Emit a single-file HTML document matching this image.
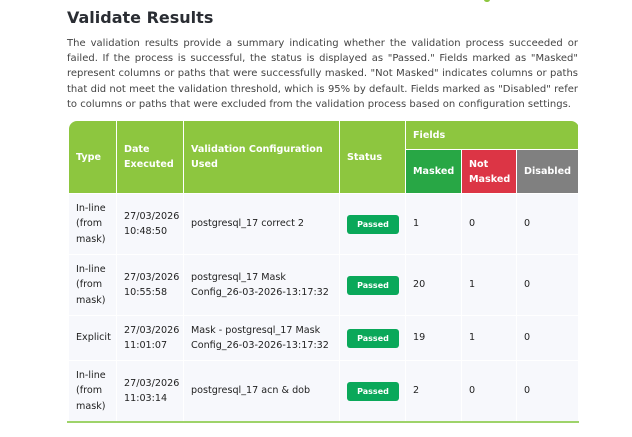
<!DOCTYPE html>
<html><head><style>
body{margin:0;width:632px;height:437px;background:#fff;font-family:"DejaVu Sans","Liberation Sans",sans-serif;color:#222;position:relative;overflow:hidden}
h1{position:absolute;left:67px;top:8px;margin:0;font-size:16px;font-weight:bold;color:#2a2d33}
.p{position:absolute;left:67px;top:36px;width:511px;margin:0;font-size:10px;line-height:15.2px;color:#444}
.p div{text-align:justify;text-align-last:justify;white-space:nowrap}
.p div.l{text-align-last:left}
table{position:absolute;left:68px;top:120px;width:510px;border-collapse:collapse;font-size:9.6px;table-layout:fixed}
td,th{border:1px solid #fff;padding:0 0 0 7px;text-align:left;vertical-align:middle;white-space:nowrap}
th{background:#8dc63f;color:#fff;font-weight:bold;line-height:15px}
td{background:#f7f8fc;color:#222;line-height:15.5px}
.m{background:#28a745!important}.n{background:#dc3545!important}.d{background:#808080!important}
.b{display:inline-block;background:#0aa85a;color:#fff;font-size:8px;font-weight:bold;width:52px;height:19px;line-height:19px;text-align:center;border-radius:3px;padding:0}
.tl{border-top-left-radius:8px}.tr{border-top-right-radius:8px}
.line{position:absolute;left:67px;top:421px;width:512px;height:2px;background:#9ed36a}
</style></head><body>
<div style="position:absolute;left:484px;top:-3px;width:6px;height:5px;border-radius:3px;background:#8dc63f"></div>
<h1>Validate Results</h1>
<div class="p">
<div>The validation results provide a summary indicating whether the validation process succeeded or</div>
<div>failed. If the process is successful, the status is displayed as "Passed." Fields marked as "Masked"</div>
<div>represent columns or paths that were successfully masked. "Not Masked" indicates columns or paths</div>
<div>that did not meet the validation threshold, which is 95% by default. Fields marked as "Disabled" refer</div>
<div class="l">to columns or paths that were excluded from the validation process based on configuration settings.</div>
</div>
<table>
<colgroup><col style="width:48px"><col style="width:67px"><col style="width:156px"><col style="width:66px"><col style="width:56px"><col style="width:55px"><col style="width:62px"></colgroup>
<tr style="height:29px"><th rowspan="2" class="tl">Type</th><th rowspan="2">Date<br>Executed</th><th rowspan="2">Validation Configuration<br>Used</th><th rowspan="2">Status</th><th colspan="3" class="tr">Fields</th></tr>
<tr style="height:44px"><th class="m">Masked</th><th class="n">Not<br>Masked</th><th class="d">Disabled</th></tr>
<tr style="height:61px"><td>In-line<br>(from<br>mask)</td><td>27/03/2026<br>10:48:50</td><td>postgresql_17 correct 2</td><td><span class="b">Passed</span></td><td>1</td><td>0</td><td>0</td></tr>
<tr style="height:61px"><td>In-line<br>(from<br>mask)</td><td>27/03/2026<br>10:55:58</td><td>postgresql_17 Mask<br>Config_26-03-2026-13:17:32</td><td><span class="b">Passed</span></td><td>20</td><td>1</td><td>0</td></tr>
<tr style="height:45px"><td>Explicit</td><td>27/03/2026<br>11:01:07</td><td>Mask - postgresql_17 Mask<br>Config_26-03-2026-13:17:32</td><td><span class="b">Passed</span></td><td>19</td><td>1</td><td>0</td></tr>
<tr style="height:61px"><td>In-line<br>(from<br>mask)</td><td>27/03/2026<br>11:03:14</td><td>postgresql_17 acn &amp; dob</td><td><span class="b">Passed</span></td><td>2</td><td>0</td><td>0</td></tr>
</table>
<div class="line"></div>
</body></html>
